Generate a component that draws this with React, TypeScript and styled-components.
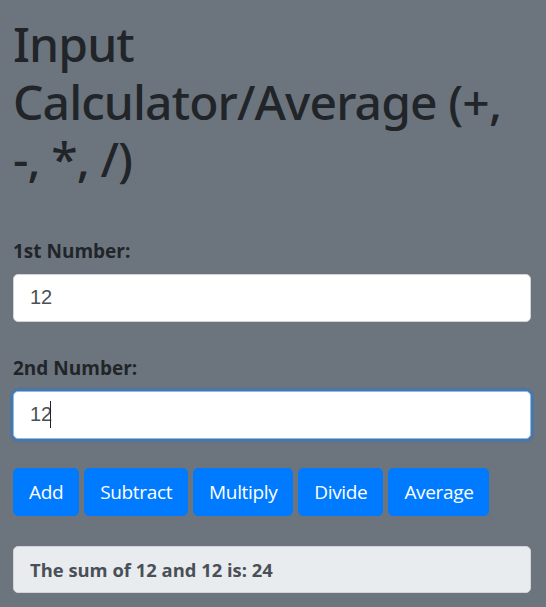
import React from "react";
import styled, { createGlobalStyle } from "styled-components";

const GlobalStyle = createGlobalStyle`
  html, body {
    margin: 0;
    padding: 0;
    background: #6c757d;
  }
  body {
    font-family: "Open Sans", "Noto Sans", sans-serif;
    color: #212529;
  }
  * { box-sizing: border-box; }
`;

const Page = styled.div`
  padding: 15px 15px 12px 13px;
`;

const Title = styled.h1`
  margin: 0 0 51px;
  font-family: "Noto Sans", "Open Sans", sans-serif;
  font-size: 48px;
  font-weight: 500;
  letter-spacing: -0.9px;
  line-height: 1.2;
  color: #212529;
`;

const Fields = styled.div`
  display: flex;
  flex-direction: column;
  gap: 34px;
`;

const Field = styled.div``;

const Label = styled.label`
  display: block;
  font-size: 19px;
  font-weight: 700;
  line-height: 25px;
  margin-bottom: 10px;
  color: #212529;
`;

const InputWrap = styled.div`
  position: relative;
`;

const Input = styled.input<{ $focused?: boolean }>`
  display: block;
  width: 100%;
  height: 48px;
  padding: 8px 16px;
  font-family: "Liberation Sans", Arial, sans-serif;
  font-size: 20px;
  line-height: 1.5;
  color: #495057;
  background: #fff;
  border: 1px solid ${(p) => (p.$focused ? "#80bdff" : "#ced4da")};
  border-radius: 5px;
  outline: none;
  caret-color: transparent;
  box-shadow: ${(p) => (p.$focused ? "0 0 0 3.2px rgba(0, 123, 255, 0.25)" : "none")};
`;

const Caret = styled.span`
  position: absolute;
  left: 37px;
  top: 10px;
  width: 1px;
  height: 27px;
  background: #212529;
`;

const ButtonRow = styled.div`
  display: flex;
  flex-wrap: wrap;
  gap: 5px;
  margin: 29px 0 30px;
`;

const Button = styled.button`
  height: 48px;
  padding: 0 15px;
  font-family: "Open Sans", "Noto Sans", sans-serif;
  font-size: 19px;
  letter-spacing: -0.35px;
  line-height: 1.5;
  color: #fff;
  background: #007bff;
  border: 1px solid #007bff;
  border-radius: 5px;
  cursor: pointer;
`;

const Result = styled.div`
  height: 47px;
  display: flex;
  align-items: center;
  padding: 0 16px;
  font-size: 18.4px;
  font-weight: 700;
  color: #495057;
  background: #e9ecef;
  border: 1px solid #ced4da;
  border-radius: 5px;
`;

export default function App() {
  return (
    <>
      <GlobalStyle />
      <Page>
        <Title>Input Calculator/Average (+, -, *, /)</Title>
        <Fields>
          <Field>
            <Label htmlFor="n1">1st Number:</Label>
            <InputWrap>
              <Input id="n1" type="text" defaultValue="12" />
            </InputWrap>
          </Field>
          <Field>
            <Label htmlFor="n2">2nd Number:</Label>
            <InputWrap>
              <Input id="n2" type="text" defaultValue="12" $focused />
              <Caret />
            </InputWrap>
          </Field>
        </Fields>
        <ButtonRow>
          <Button>Add</Button>
          <Button>Subtract</Button>
          <Button>Multiply</Button>
          <Button>Divide</Button>
          <Button>Average</Button>
        </ButtonRow>
        <Result>The sum of 12 and 12 is: 24</Result>
      </Page>
    </>
  );
}
